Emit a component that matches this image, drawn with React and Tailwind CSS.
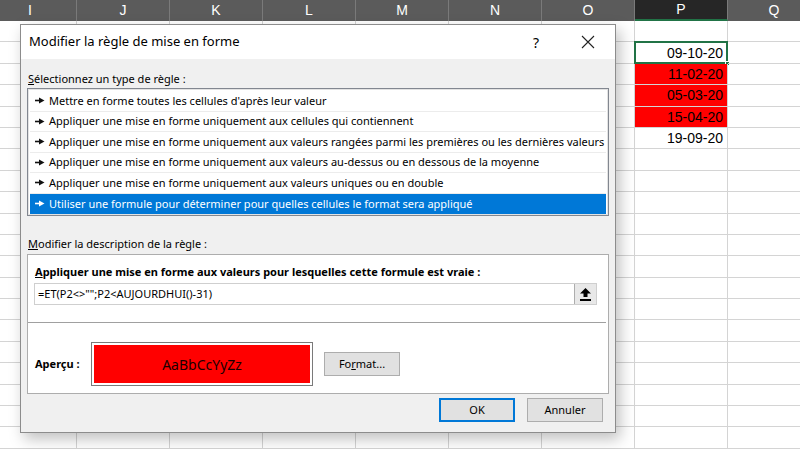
import React from 'react';

const columns = ['I', 'J', 'K', 'L', 'M', 'N', 'O', 'P', 'Q'];

const pValues = {
  1: { text: '09-10-20', active: true },
  2: { text: '11-02-20', red: true },
  3: { text: '05-03-20', red: true },
  4: { text: '15-04-20', red: true },
  5: { text: '19-09-20' },
};

const ruleTypes = [
  "Mettre en forme toutes les cellules d'après leur valeur",
  'Appliquer une mise en forme uniquement aux cellules qui contiennent',
  'Appliquer une mise en forme uniquement aux valeurs rangées parmi les premières ou les dernières valeurs',
  'Appliquer une mise en forme uniquement aux valeurs au-dessus ou en dessous de la moyenne',
  'Appliquer une mise en forme uniquement aux valeurs uniques ou en double',
  'Utiliser une formule pour déterminer pour quelles cellules le format sera appliqué',
];

function Arrow({ color }) {
  return (
    <svg width="10" height="7" viewBox="0 0 10 7" className="shrink-0">
      <rect x="0" y="2.7" width="5" height="1.6" fill={color} />
      <polygon points="4,0.5 9.5,3.5 4,6.5" fill={color} />
    </svg>
  );
}

function Sheet() {
  return (
    <div className="w-[800px] h-[449px] overflow-hidden bg-white font-['Liberation_Sans',sans-serif]">
      {/* column headers */}
      <div className="flex h-[21px] bg-[#5b5b5b] ml-[-16px]">
        {columns.map((c) => (
          <div
            key={c}
            className={
              'w-[93px] shrink-0 flex items-center justify-center text-[14px] border-r border-[#7a7a7a] ' +
              (c === 'P' ? 'bg-[#262626] text-white border-b-2 border-b-[#217346]' : 'text-white')
            }
          >
            {c}
          </div>
        ))}
      </div>
      {/* rows */}
      {Array.from({ length: 20 }).map((_, r) => (
        <div key={r} className="flex h-[21.4px] ml-[-16px]">
          {columns.map((c) => {
            const v = c === 'P' ? pValues[r] : null;
            return (
              <div
                key={c}
                className={
                  'relative w-[93px] shrink-0 border-r border-b border-[#d4d4d4] flex items-center justify-end pr-[4px] pt-[1px] text-[14px] text-black ' +
                  (v && v.red ? 'bg-[#ff0000]' : '')
                }
              >
                {v && v.text}
                {v && v.active && (
                  <>
                    <div className="absolute inset-[-1px] border-2 border-[#217346]" />
                    <div className="absolute right-[-3px] bottom-[-3px] w-[5px] h-[5px] bg-[#217346] border border-white" />
                  </>
                )}
              </div>
            );
          })}
        </div>
      ))}
    </div>
  );
}

function Dialog() {
  return (
    <div className="absolute left-[20px] top-[24px] w-[596px] h-[409px] flex flex-col border border-[#8c8c8c] bg-[#f0f0f0] shadow-[4px_6px_14px_rgba(0,0,0,0.25)] font-['Noto_Sans',sans-serif] text-[11px] text-black">
      {/* title bar */}
      <div className="h-[34px] bg-white flex items-center pl-[8px] shrink-0">
        <span className="text-[13px] flex-1">Modifier la règle de mise en forme</span>
        <span className="w-[50px] text-center text-[14px] mr-[2px]">?</span>
        <span className="w-[50px] flex justify-center mr-[2px]">
          <svg width="14" height="14" viewBox="0 0 14 14">
            <path d="M1 1L13 13M13 1L1 13" stroke="#222" strokeWidth="1.1" />
          </svg>
        </span>
      </div>

      <div className="flex flex-col px-[6px] flex-1">
        <div className="mt-[11px] h-[17px] leading-[17px] pl-[1px]">
          <span className="underline">S</span>électionnez un type de règle :
        </div>
        {/* rule list */}
        <div className="mt-[1px] h-[128px] bg-white border border-[#828790] shadow-[inset_0_0_0_1px_#e3e3e3] pt-[2px] px-[2px]">
          {ruleTypes.map((t, i) => {
            const selected = i === ruleTypes.length - 1;
            return (
              <div
                key={t}
                className={
                  'h-[20.5px] flex items-center gap-[4px] pl-[5px] whitespace-nowrap ' +
                  (selected ? 'bg-[#0078d7] text-white' : 'border-b border-[#ececec]')
                }
              >
                <Arrow color={selected ? '#ffffff' : '#111111'} />
                <span>{t}</span>
              </div>
            );
          })}
        </div>

        <div className="mt-[19px] h-[17px] leading-[17px] pl-[1px]">
          <span className="underline">M</span>odifier la description de la règle :
        </div>
        {/* description box */}
        <div className="mt-[2px] h-[140px] bg-white border border-[#adadad] flex flex-col">
          <div className="px-[7px] pt-[8px] font-bold h-[28px] leading-[17px]">
            <span className="underline">A</span>ppliquer une mise en forme aux valeurs pour lesquelles cette formule est vraie :
          </div>
          <div className="mx-[6px] mr-[11px] h-[22px] flex border border-[#cfcfcf] bg-white">
            <div className="flex-1 flex items-center pl-[3px]">=ET(P2&lt;&gt;"";P2&lt;AUJOURDHUI()-31)</div>
            <div className="w-[22px] h-[20px] bg-[#e8e8e8] border-l border-[#adadad] flex items-center justify-center">
              <svg width="11" height="13" viewBox="0 0 11 13">
                <polygon points="5.5,0 11,5.5 7.5,5.5 7.5,9 3.5,9 3.5,5.5 0,5.5" fill="#000" />
                <rect x="0" y="11" width="11" height="2" fill="#000" />
              </svg>
            </div>
          </div>
          <div className="mt-[17px] border-t border-[#a0a0a0] mr-[2px]" />
          <div className="flex items-center mt-[19px] pl-[7px]">
            <span className="font-bold w-[56px]">Aperçu :</span>
            <div className="w-[222px] h-[44px] border border-[#7a7a7a] p-[2px] bg-white">
              <div className="w-full h-full bg-[#ff0000] flex items-center justify-center text-[14px] text-[#1a0000]">
                AaBbCcYyZz
              </div>
            </div>
            <button className="ml-[11px] w-[76px] h-[24px] bg-[#e1e1e1] border border-[#adadad]">
              Fo<span className="underline">r</span>mat...
            </button>
          </div>
        </div>

        <div className="flex justify-end gap-[12px] mt-[4px] pr-[6px]">
          <button className="w-[76px] h-[24px] bg-[#e1e1e1] border-2 border-[#0078d7]">OK</button>
          <button className="w-[76px] h-[24px] bg-[#e1e1e1] border border-[#adadad]">Annuler</button>
        </div>
      </div>
    </div>
  );
}

export default function App() {
  return (
    <div className="relative w-[800px] h-[449px] overflow-hidden">
      <Sheet />
      <Dialog />
    </div>
  );
}
